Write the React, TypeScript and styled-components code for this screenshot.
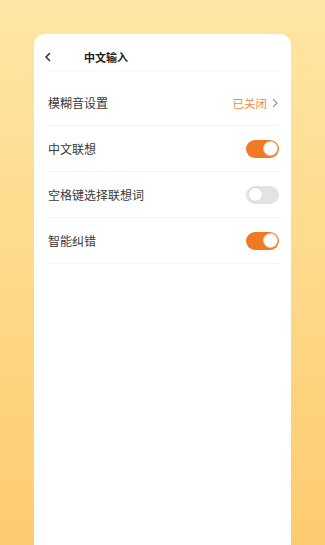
import React, { useState } from "react";
import styled, { createGlobalStyle } from "styled-components";

const Global = createGlobalStyle`
  html, body { margin: 0; padding: 0; }
  body {
    font-family: "Noto Sans CJK SC", "Noto Sans", sans-serif;
    -webkit-font-smoothing: antialiased;
  }
`;

const Page = styled.div`
  width: 325px;
  height: 545px;
  box-sizing: border-box;
  padding: 34px 34px 0 34px;
  background: linear-gradient(180deg, #fee6a4 0%, #fed98a 50%, #fdcb6f 100%);
  display: flex;
  overflow: hidden;
`;

const Card = styled.div`
  flex: 1;
  background: #ffffff;
  border-radius: 11px 11px 0 0;
  display: flex;
  flex-direction: column;
  padding: 0 12px 0 14px;
`;

const Header = styled.div`
  height: 38px;
  display: flex;
  align-items: center;
  border-bottom: 1px solid #f8f8f8;
  box-sizing: border-box;
  padding-top: 8px;
  margin-bottom: 8px;
`;

const Back = styled.div`
  width: 41px;
  display: flex;
  align-items: center;
  margin-left: -5px;
`;

const Title = styled.div`
  font-size: 11px;
  font-weight: 700;
  color: #222;
`;

const Row = styled.div`
  height: 46px;
  display: flex;
  align-items: center;
  justify-content: space-between;
  border-bottom: 1px solid #f4f4f4;
  box-sizing: border-box;
`;

const Label = styled.div`
  font-size: 12px;
  color: #383838;
`;

const Value = styled.div`
  display: flex;
  align-items: center;
  gap: 4px;
  font-size: 11.5px;
  color: #e9904a;
`;

const Track = styled.div<{ $on: boolean }>`
  width: 33px;
  height: 18px;
  border-radius: 9px;
  background: ${(p) => (p.$on ? "#ef7a22" : "#e3e3e3")};
  position: relative;
  cursor: pointer;
`;

const Knob = styled.div<{ $on: boolean }>`
  position: absolute;
  top: 1.5px;
  left: ${(p) => (p.$on ? "16.5px" : "1.5px")};
  width: 15px;
  height: 15px;
  border-radius: 50%;
  background: #fff;
  box-sizing: border-box;
  border: 1px solid ${(p) => (p.$on ? "#f3c9a5" : "#d8d8d8")};
`;

const Toggle = ({ initial }: { initial: boolean }) => {
  const [on, setOn] = useState(initial);
  return (
    <Track $on={on} onClick={() => setOn(!on)}>
      <Knob $on={on} />
    </Track>
  );
};

export default function App() {
  return (
    <>
      <Global />
      <Page>
        <Card>
          <Header>
            <Back>
              <svg width="10" height="10" viewBox="0 0 10 10">
                <path d="M6.5 1.5 L3 5 L6.5 8.5" fill="none" stroke="#333" strokeWidth="1.6" strokeLinecap="round" strokeLinejoin="round" />
              </svg>
            </Back>
            <Title>中文输入</Title>
          </Header>
          <Row>
            <Label>模糊音设置</Label>
            <Value>
              已关闭
              <svg width="8" height="10" viewBox="0 0 8 10">
                <path d="M2.5 1.5 L6 5 L2.5 8.5" fill="none" stroke="#999" strokeWidth="1.2" strokeLinecap="round" strokeLinejoin="round" />
              </svg>
            </Value>
          </Row>
          <Row>
            <Label>中文联想</Label>
            <Toggle initial={true} />
          </Row>
          <Row>
            <Label>空格键选择联想词</Label>
            <Toggle initial={false} />
          </Row>
          <Row>
            <Label>智能纠错</Label>
            <Toggle initial={true} />
          </Row>
        </Card>
      </Page>
    </>
  );
}
